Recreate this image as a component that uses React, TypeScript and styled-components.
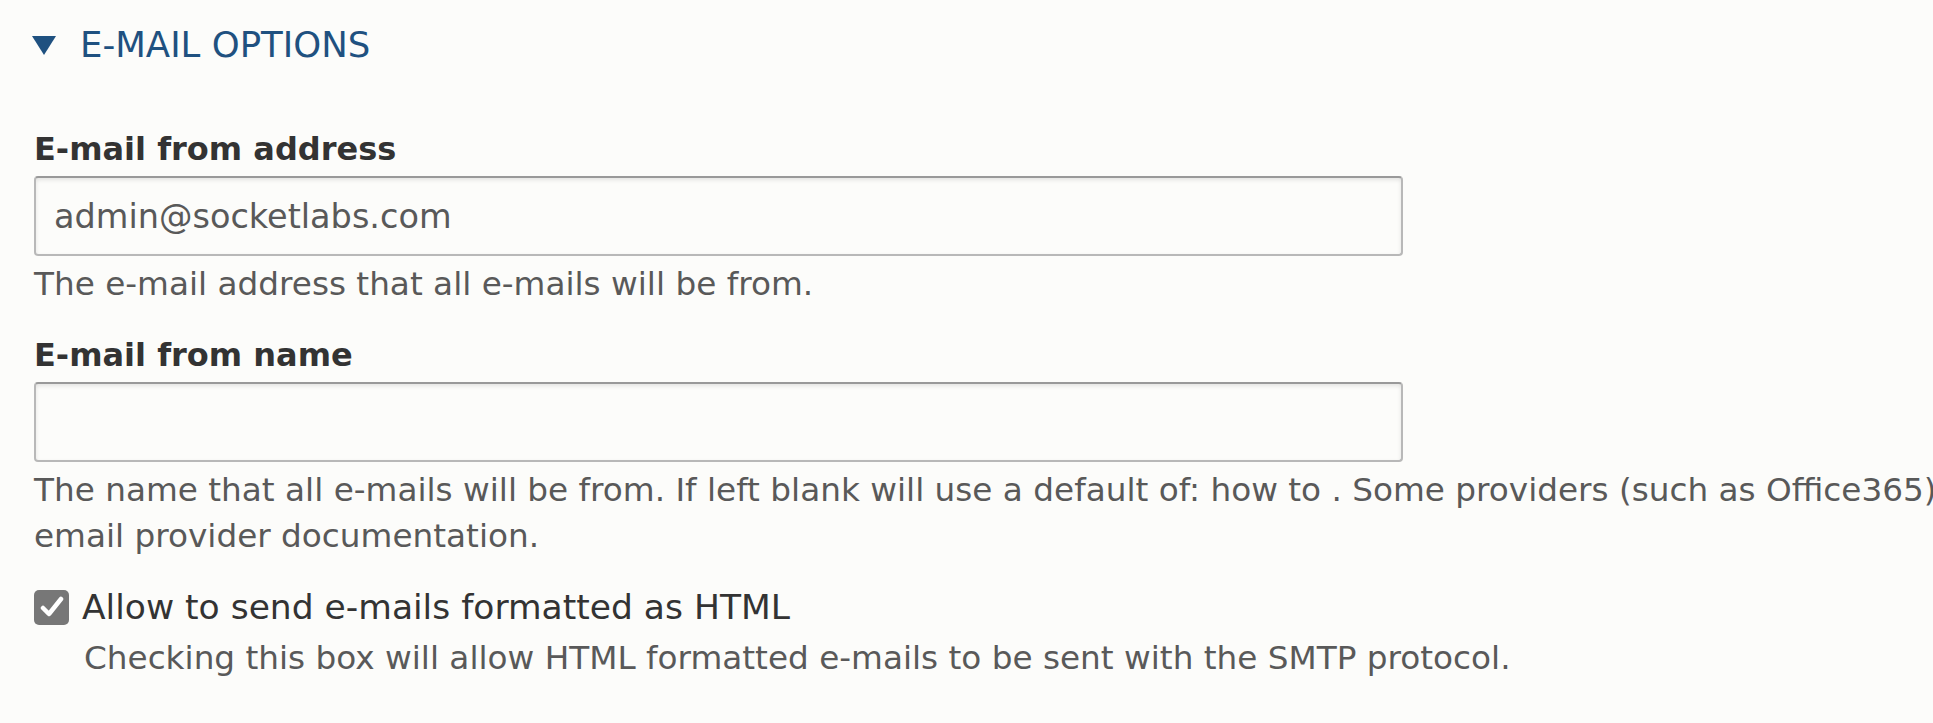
import React from 'react';
import styled, { createGlobalStyle } from 'styled-components';

const Global = createGlobalStyle`
    html, body {
        margin: 0;
        padding: 0;
        background: #fcfcfa;
        overflow: hidden;
    }
    body {
        font-family: "DejaVu Sans", "Liberation Sans", sans-serif;
        font-size: 33px;
        line-height: 46px;
        color: #333;
    }
`

const Page = styled.div`
    width: 2700px;
    padding: 22px 0 0 34px;
`

const Summary = styled.div`
    display: flex;
    align-items: center;
    font-size: 35.5px;
    color: #1f5180;
    text-transform: uppercase;
    .arrow {
        width: 24px;
        height: 19px;
        margin: 1px 24px 0 -2px;
    }
`

const Body = styled.div`
    padding-top: 58px;
`

const FormItem = styled.div`
    margin-bottom: 25px;
    label {
        display: block;
        font-size: 32px;
        font-weight: bold;
        color: #333;
        margin-bottom: 4px;
    }
`

const TextInput = styled.input`
    display: block;
    box-sizing: border-box;
    width: 1369px;
    height: 80px;
    margin: 0;
    padding: 0 18px;
    font: inherit;
    font-size: 33.5px;
    color: #595959;
    background: #fcfcfa;
    border: 2px solid #b8b8b8;
    border-top-color: #999;
    border-radius: 4px;
    box-shadow: inset 0 2px 4px rgba(0, 0, 0, 0.1);
    outline: none;
`

const Description = styled.div`
    margin-top: 5px;
    font-size: 32.7px;
    color: #595959;
    white-space: nowrap;
`

const CheckRow = styled.label`
    display: flex;
    align-items: center;
    gap: 13px;
    font-size: 34.5px;
    color: #333;
`

const Box = styled.span`
    display: inline-flex;
    align-items: center;
    justify-content: center;
    width: 35px;
    height: 35px;
    border-radius: 5px;
    background: #777;
    flex-shrink: 0;
    svg {
        width: 24px;
        height: 24px;
    }
`

const CheckDescription = styled(Description)`
    margin-top: 5px;
    padding-left: 50px;
`

function App() {
    return (
        <Page>
            <Global />
            <Summary>
                <svg className="arrow" viewBox="0 0 24 19">
                    <polygon points="0,0 24,0 12,19" fill="#1f5180" />
                </svg>
                E-mail options
            </Summary>
            <Body>
                <FormItem>
                    <label htmlFor="from-address">E-mail from address</label>
                    <TextInput id="from-address" defaultValue="admin@socketlabs.com" />
                    <Description>The e-mail address that all e-mails will be from.</Description>
                </FormItem>
                <FormItem>
                    <label htmlFor="from-name">E-mail from name</label>
                    <TextInput id="from-name" defaultValue="" />
                    <Description>
                        The name that all e-mails will be from. If left blank will use a default of: how to . Some providers (such as Office365) need that this field is left blank. Consult your
                        <br />
                        email provider documentation.
                    </Description>
                </FormItem>
                <CheckRow>
                    <Box>
                        <svg viewBox="0 0 24 24">
                            <path d="M3 13 L9 19 L21 4" stroke="#fff" strokeWidth="4.5" fill="none" strokeLinecap="round" strokeLinejoin="round" />
                        </svg>
                    </Box>
                    Allow to send e-mails formatted as HTML
                </CheckRow>
                <CheckDescription>Checking this box will allow HTML formatted e-mails to be sent with the SMTP protocol.</CheckDescription>
            </Body>
        </Page>
    );
}

export default App;
